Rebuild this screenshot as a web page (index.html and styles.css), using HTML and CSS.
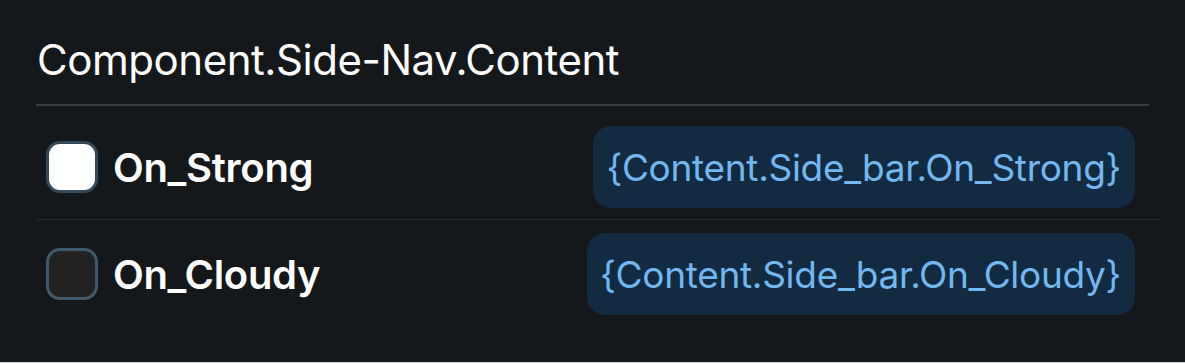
FILE: index.html
```html
<!DOCTYPE html>
<html>
<head>
<meta charset="utf-8">
<link rel="stylesheet" href="styles.css">
</head>
<body>
<div class="panel">
  <div class="header">
    <h1 class="title">Component.Side-Nav.Content</h1>
  </div>
  <div class="row row-first">
    <div class="item">
      <span class="swatch swatch-white"></span>
      <span class="label">On_Strong</span>
    </div>
    <span class="token token-first">{Content.Side_bar.On_Strong}</span>
  </div>
  <div class="row row-last">
    <div class="item">
      <span class="swatch swatch-dark"></span>
      <span class="label">On_Cloudy</span>
    </div>
    <span class="token">{Content.Side_bar.On_Cloudy}</span>
  </div>
</div>
</body>
</html>
```
FILE: styles.css
```css
html, body {
  margin: 0;
  padding: 0;
}
body {
  background: #15181b;
  width: 1185px;
  height: 363px;
  overflow: hidden;
  font-family: Inter, "Noto Sans", "Liberation Sans", sans-serif;
  box-sizing: border-box;
  border-bottom: 1px solid #cfcfcf;
}
.panel {
  padding-left: 36px;
}
.header {
  width: 1113px;
  height: 104px;
  border-bottom: 2px solid #3a3d41;
  box-sizing: content-box;
}
.title {
  margin: 0;
  padding: 37px 0 0 1px;
  font-size: 42px;
  font-weight: 400;
  line-height: 46px;
  color: #ffffff;
  letter-spacing: -0.45px;
}
.row {
  width: 1125px;
  display: flex;
  align-items: center;
  justify-content: space-between;
}
.row-first {
  padding: 20px 0 11px;
  border-bottom: 1px solid #26292c;
}
.row-last {
  padding: 13px 0;
}
.item {
  display: flex;
  align-items: center;
  gap: 15px;
  padding-left: 10px;
}
.swatch {
  width: 46px;
  height: 46px;
  border-radius: 14px;
  border: 3px solid #3c5566;
  display: block;
}
.swatch-white {
  background: #ffffff;
  border-color: #34495a;
}
.swatch-dark {
  background: #222222;
  border-color: #3f5a6c;
}
.label {
  font-size: 40px;
  font-weight: 600;
  color: #ffffff;
  letter-spacing: -0.3px;
}
.token {
  margin-right: 26px;
  background: #132b41;
  color: #72b8ee;
  border-radius: 18px;
  height: 82px;
  display: flex;
  align-items: center;
  padding: 0 14px 0 13px;
  font-size: 37px;
  font-weight: 400;
  letter-spacing: -0.3px;
}
```
